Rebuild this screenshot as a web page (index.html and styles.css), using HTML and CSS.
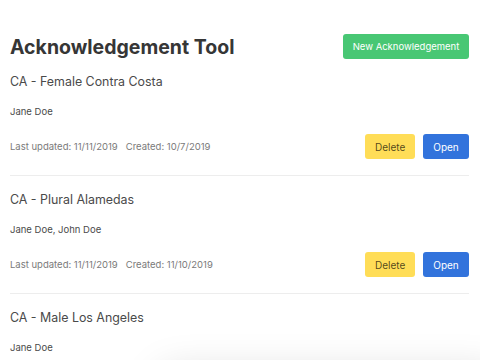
FILE: index.html
```html
<!DOCTYPE html>
<html lang="en">
<head>
  <meta charset="UTF-8">
  <meta name="viewport" content="width=device-width, initial-scale=1.0">
  <title>Acknowledgement Tool</title>
  <link rel="stylesheet" href="styles.css">
</head>
<body>
  <div class="page">
    <div class="header">
      <h1>Acknowledgement Tool</h1>
      <button class="btn btn-new">New Acknowledgement</button>
    </div>

    <div class="item">
      <div class="item-title">CA - Female Contra Costa</div>
      <div class="item-names">Jane Doe</div>
      <div class="item-footer">
        <span class="meta">Last updated: 11/11/2019 &nbsp; Created: 10/7/2019</span>
        <div class="actions">
          <button class="btn btn-delete">Delete</button>
          <button class="btn btn-open">Open</button>
        </div>
      </div>
    </div>

    <div class="item">
      <div class="item-title">CA - Plural Alamedas</div>
      <div class="item-names">Jane Doe, John Doe</div>
      <div class="item-footer">
        <span class="meta">Last updated: 11/11/2019 &nbsp; Created: 11/10/2019</span>
        <div class="actions">
          <button class="btn btn-delete">Delete</button>
          <button class="btn btn-open">Open</button>
        </div>
      </div>
    </div>

    <div class="item">
      <div class="item-title">CA - Male Los Angeles</div>
      <div class="item-names">Jane Doe</div>
      <div class="item-footer">
        <span class="meta">Last updated: 11/11/2019 &nbsp; Created: 11/10/2019</span>
        <div class="actions">
          <button class="btn btn-delete">Delete</button>
          <button class="btn btn-open">Open</button>
        </div>
      </div>
    </div>
  </div>

  <!-- toast sitting just under the fold -->
  <div class="toast"></div>
</body>
</html>
```

FILE: styles.css
```css
body {
  font-family: Inter, "Noto Sans", sans-serif;
  margin: 0;
  padding: 0;
  background-color: #fff;
  color: #4a4a4a;
  overflow: hidden;
}

.page {
  padding: 34px 11px 0 10px;
}

.header {
  display: flex;
  justify-content: space-between;
  align-items: center;
  height: 25px;
}

h1 {
  margin: 0;
  font-size: 19.5px;
  font-weight: 700;
  color: #363636;
}

.btn {
  font-family: inherit;
  font-size: 10px;
  height: 25px;
  padding: 0 10px;
  border: none;
  border-radius: 3px;
  cursor: pointer;
}

.btn-new {
  background: #48c774;
  color: #fff;
  font-size: 9.5px;
  width: 126px;
  padding: 0;
}

.btn-delete {
  background: #ffdd57;
  color: rgba(0, 0, 0, 0.7);
  width: 50px;
}

.btn-open {
  background: #3273dc;
  color: #fff;
  width: 46px;
}

.item {
  padding: 16px 0 16px 0;
  border-bottom: 1px solid #ededed;
}

.header + .item {
  padding-top: 15px;
}

.item-title {
  font-size: 12.4px;
  line-height: 16px;
  color: #4a4a4a;
}

.item-names {
  font-size: 9.5px;
  line-height: 12px;
  margin-top: 16px;
  color: #4a4a4a;
}

.item-footer {
  display: flex;
  justify-content: space-between;
  align-items: center;
  margin-top: 16px;
}

.meta {
  font-size: 9.5px;
  color: #7a7a7a;
}

.actions {
  display: flex;
  gap: 8px;
}

.toast {
  position: fixed;
  left: 160px;
  right: -20px;
  top: 372px;
  height: 60px;
  border-radius: 10px;
  box-shadow: 0 0 40px rgba(0, 0, 0, 0.15);
  background: #fff;
}
```
